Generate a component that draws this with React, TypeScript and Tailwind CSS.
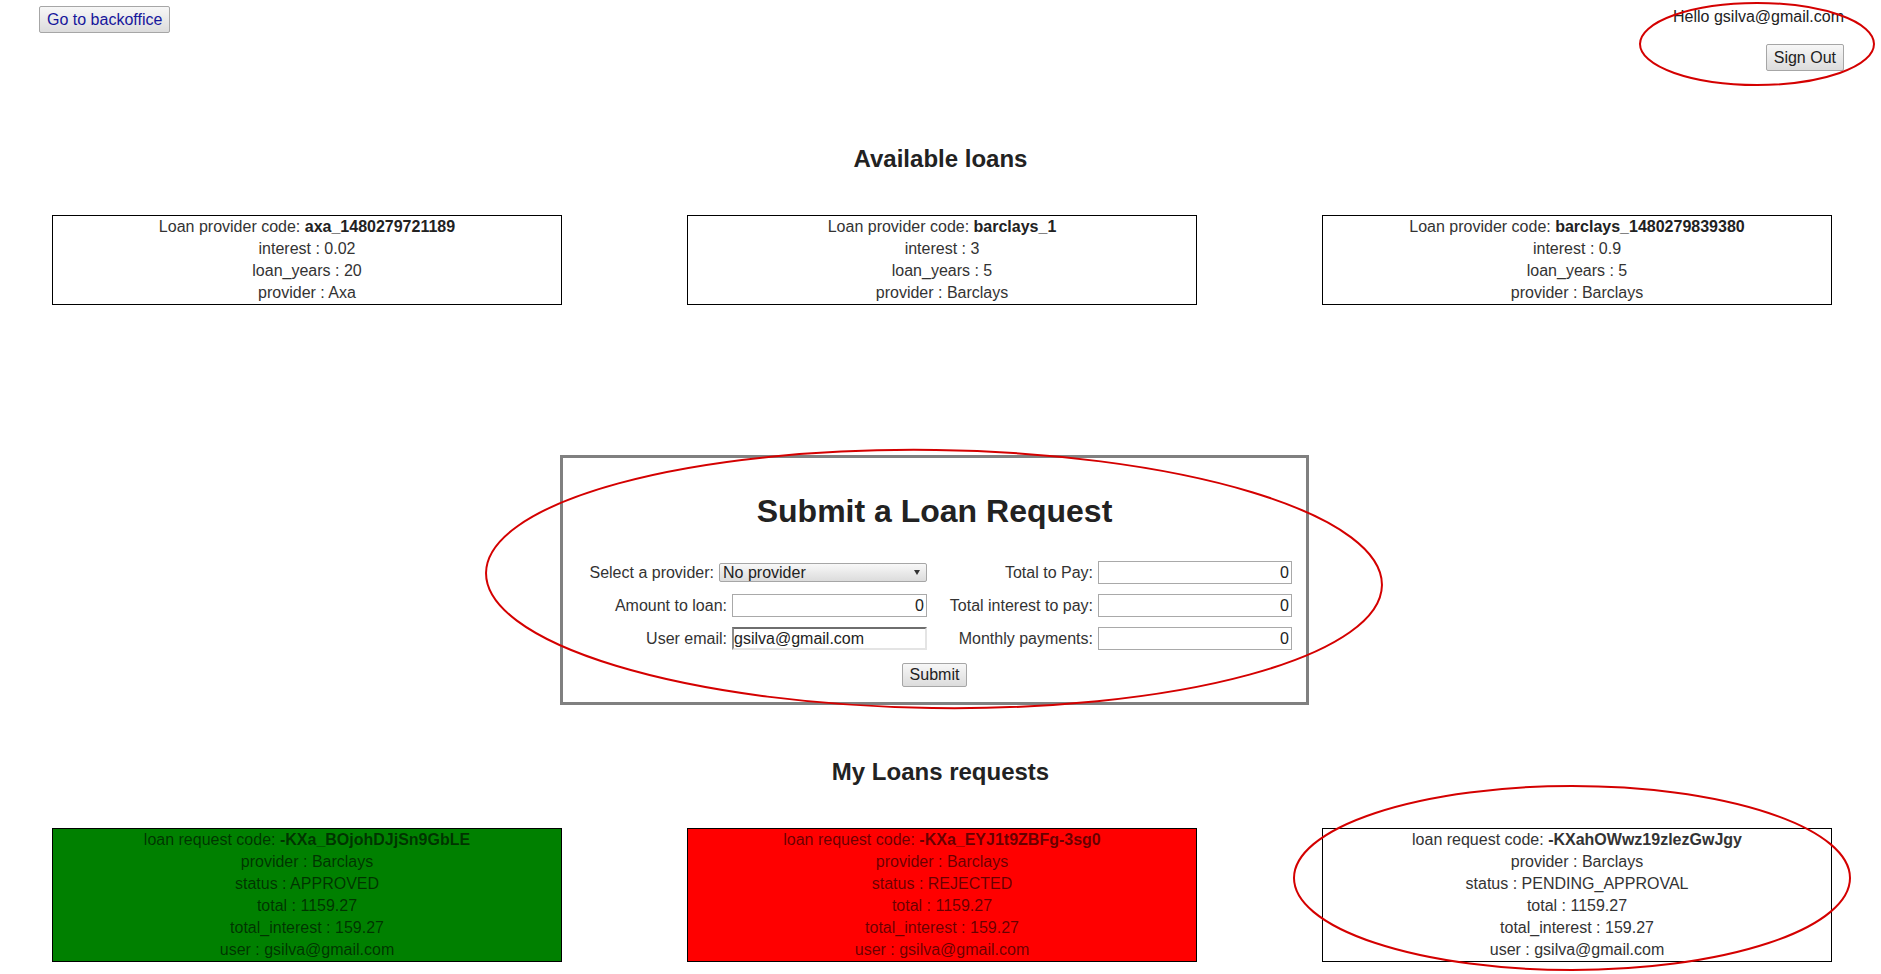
import React from "react";

interface Provider {
  code: string;
  interest: string;
  years: string;
  provider: string;
}

interface LoanRequest {
  code: string;
  status: string;
  tone: string;
}

const providers: Provider[] = [
  { code: "axa_1480279721189", interest: "0.02", years: "20", provider: "Axa" },
  { code: "barclays_1", interest: "3", years: "5", provider: "Barclays" },
  { code: "barclays_1480279839380", interest: "0.9", years: "5", provider: "Barclays" }
];

const requests: LoanRequest[] = [
  { code: "-KXa_BOjohDJjSn9GbLE", status: "APPROVED", tone: "bg-[#008000] text-black/60" },
  { code: "-KXa_EYJ1t9ZBFg-3sg0", status: "REJECTED", tone: "bg-[#ff0000] text-black/60" },
  { code: "-KXahOWwz19zlezGwJgy", status: "PENDING_APPROVAL", tone: "bg-white text-[#333]" }
];

const Btn: React.FC<{ children: React.ReactNode; className?: string }> = ({ children, className = "" }) => (
  <button
    className={`rounded-[2px] border border-[#a6a6a6] bg-linear-to-b from-[#f7f7f7] to-[#dcdcdc] px-[7px] text-[16px] ${className}`}
  >
    {children}
  </button>
);

const NumField: React.FC<{ w: string }> = ({ w }) => (
  <input
    readOnly
    value="0"
    className={`${w} h-[23px] border border-[#a9a9a9] bg-white px-[2px] text-right text-[16px] text-[#222] outline-none`}
  />
);

const App: React.FC = () => {
  return (
    <div className="relative min-h-[974px] w-[1881px] bg-white font-['Liberation_Sans',Arial,sans-serif] text-[16px] text-[#333]">
      <header className="flex items-start justify-between">
        <Btn className="ml-[39px] mt-[6px] py-[3px] leading-[19px] text-[#16169b]">Go to backoffice</Btn>
        <div className="flex flex-col items-end pr-[37px] pt-[6px]">
          <span className="leading-[22px] text-[#222]">Hello gsilva@gmail.com</span>
          <Btn className="mt-[16px] py-[3px] leading-[19px] text-[#222]">Sign Out</Btn>
        </div>
      </header>

      <h2 className="mt-[74px] text-center text-[24px] font-bold leading-[28px] text-[#222]">Available loans</h2>

      <section className="mt-[42px] flex gap-[125px] pl-[52px]">
        {providers.map((p) => (
          <div key={p.code} className="w-[510px] border border-black text-center leading-[22px]">
            <div>
              Loan provider code: <b className="text-[#222]">{p.code}</b>
            </div>
            <div>interest : {p.interest}</div>
            <div>loan_years : {p.years}</div>
            <div>provider : {p.provider}</div>
          </div>
        ))}
      </section>

      <section className="ml-[560px] mt-[150px] w-[749px] border-[3px] border-[#808080] pb-[15px] pt-[35px]">
        <h1 className="text-center text-[32px] font-bold leading-[37px] text-[#222]">Submit a Loan Request</h1>

        <div className="mt-[31px] grid grid-cols-[364px_365px] gap-y-[10px]">
          <div className="flex h-[23px] items-center justify-end gap-[5px]">
            <span>Select a provider:</span>
            <div className="flex h-[19px] w-[208px] items-center justify-between rounded-[2px] border border-[#a6a6a6] bg-linear-to-b from-[#f8f8f8] to-[#dcdcdc] pl-[3px] pr-[6px] leading-[17px] text-[#222]">
              <span>No provider</span>
              <svg width="6" height="5" viewBox="0 0 6 5">
                <polygon points="0,0 6,0 3,5" fill="#333" />
              </svg>
            </div>
          </div>
          <div className="flex h-[23px] items-center justify-end gap-[5px]">
            <span>Total to Pay:</span>
            <NumField w="w-[194px]" />
          </div>

          <div className="flex h-[23px] items-center justify-end gap-[5px]">
            <span>Amount to loan:</span>
            <NumField w="w-[195px]" />
          </div>
          <div className="flex h-[23px] items-center justify-end gap-[5px]">
            <span>Total interest to pay:</span>
            <NumField w="w-[194px]" />
          </div>

          <div className="flex h-[23px] items-center justify-end gap-[5px]">
            <span>User email:</span>
            <input
              readOnly
              value="gsilva@gmail.com"
              className="h-[23px] w-[195px] border-2 border-b-[#e4e4e4] border-l-[#8c8c8c] border-r-[#e4e4e4] border-t-[#6e6e6e] bg-white pl-0 text-[16px] text-[#222] outline-none"
            />
          </div>
          <div className="flex h-[23px] items-center justify-end gap-[5px]">
            <span>Monthly payments:</span>
            <NumField w="w-[194px]" />
          </div>
        </div>

        <div className="mt-[13px] flex justify-center">
          <Btn className="py-[2px] leading-[18px] text-[#222]">Submit</Btn>
        </div>
      </section>

      <h2 className="mt-[53px] text-center text-[24px] font-bold leading-[28px] text-[#222]">My Loans requests</h2>

      <section className="mt-[42px] flex gap-[125px] pl-[52px]">
        {requests.map((r) => (
          <div key={r.code} className={`w-[510px] border border-black text-center leading-[22px] ${r.tone}`}>
            <div>
              loan request code: <b>{r.code}</b>
            </div>
            <div>provider : Barclays</div>
            <div>status : {r.status}</div>
            <div>total : 1159.27</div>
            <div>total_interest : 159.27</div>
            <div>user : gsilva@gmail.com</div>
          </div>
        ))}
      </section>

      {/* red annotation marks drawn over the screenshot */}
      <svg
        className="pointer-events-none absolute left-0 top-0"
        width="1881"
        height="974"
        viewBox="0 0 1881 974"
        fill="none"
      >
        <ellipse cx="1757" cy="44" rx="117" ry="41" stroke="#d40000" strokeWidth="2" />
        <ellipse cx="934" cy="579" rx="448" ry="129" stroke="#d40000" strokeWidth="2" transform="rotate(0.8 934 579)" />
        <ellipse cx="1572" cy="878" rx="278" ry="92" stroke="#d40000" strokeWidth="2" />
      </svg>
    </div>
  );
};

export default App;
